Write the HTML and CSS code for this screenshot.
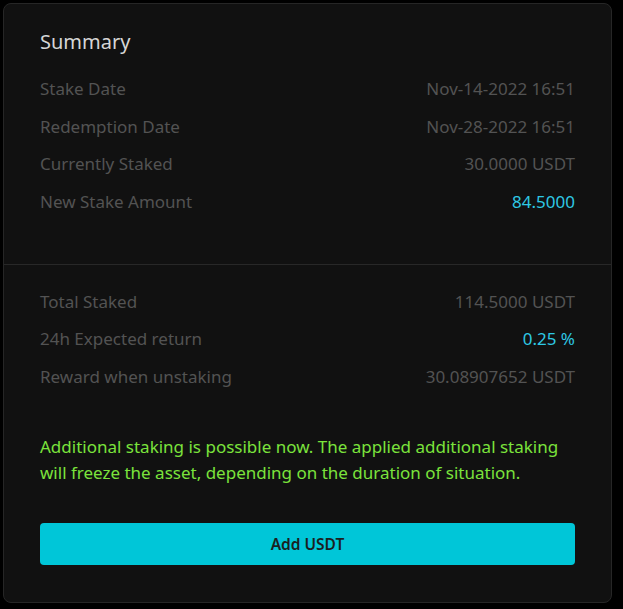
FILE: index.html
```html
<!DOCTYPE html>
<html>
<head>
<meta charset="utf-8">
<link rel="stylesheet" href="styles.css">
</head>
<body>
<div class="card">
  <section class="sec sec-top">
    <h2 class="title">Summary</h2>
    <div class="rows">
      <div class="row"><span>Stake Date</span><span>Nov-14-2022 16:51</span></div>
      <div class="row"><span>Redemption Date</span><span>Nov-28-2022 16:51</span></div>
      <div class="row"><span>Currently Staked</span><span>30.0000 USDT</span></div>
      <div class="row"><span>New Stake Amount</span><span class="hl">84.5000</span></div>
    </div>
  </section>
  <section class="sec sec-bottom">
    <div class="rows">
      <div class="row"><span>Total Staked</span><span>114.5000 USDT</span></div>
      <div class="row"><span>24h Expected return</span><span class="hl">0.25 %</span></div>
      <div class="row"><span>Reward when unstaking</span><span>30.08907652 USDT</span></div>
    </div>
    <p class="note">Additional staking is possible now. The applied additional staking will freeze the asset, depending on the duration of situation.</p>
    <button class="btn">Add USDT</button>
  </section>
</div>
</body>
</html>
```

FILE: styles.css
```css
html, body {
  margin: 0;
  background: #000;
}
body {
  padding: 3px;
  font-family: "Noto Sans", "Open Sans", sans-serif;
  font-size: 16px;
}
.card {
  width: 609px;
  height: 600px;
  box-sizing: border-box;
  background: #111111;
  border: 1px solid #262626;
  border-radius: 8px;
  display: flex;
  flex-direction: column;
}
.sec {
  padding: 0 36px;
}
.sec-top {
  padding-top: 24px;
  padding-bottom: 50px;
  border-bottom: 1px solid #282828;
}
.title {
  margin: 0;
  font-size: 20px;
  font-weight: 400;
  line-height: 28px;
  color: #d6d6d6;
}
.rows {
  display: flex;
  flex-direction: column;
  gap: 13.5px;
}
.sec-top .rows {
  margin-top: 21px;
}
.sec-bottom {
  padding-top: 25px;
}
.row {
  display: flex;
  justify-content: space-between;
  font-size: 17px;
  line-height: 24px;
  color: #535353;
}
.hl {
  color: #2ec8e4;
}
.note {
  margin: 45px 0 0;
  font-size: 17px;
  line-height: 26px;
  color: #7be33c;
}
.btn {
  display: block;
  width: 100%;
  height: 42px;
  margin-top: 37px;
  border: 0;
  border-radius: 4px;
  background: #00c6d8;
  color: #1b1f22;
  font-family: inherit;
  font-size: 15.5px;
  font-weight: 600;
}
```
